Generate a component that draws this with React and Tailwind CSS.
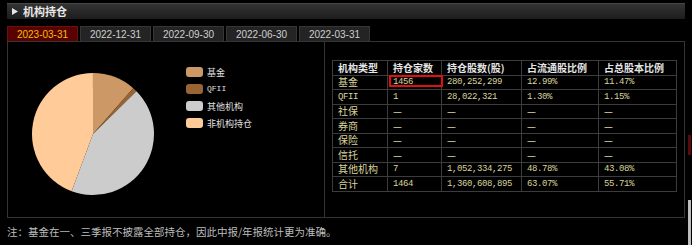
import React from 'react';

const cjk = "font-['Noto_Sans_CJK_SC',sans-serif]";
const mono = "font-['Liberation_Mono','Noto_Sans_CJK_SC',monospace]";

const tabs = ['2023-03-31', '2022-12-31', '2022-09-30', '2022-06-30', '2022-03-31'];

const slices = [
	{ name: '基金', pct: 11.47, color: '#cc9966' },
	{ name: 'QFII', pct: 1.15, color: '#996633' },
	{ name: '其他机构', pct: 43.08, color: '#cccccc' },
	{ name: '非机构持仓', pct: 44.29, color: '#ffcc99' },
];

const rows = [
	['基金', '1456', '280,252,299', '12.99%', '11.47%'],
	['QFII', '1', '28,022,321', '1.30%', '1.15%'],
	['社保', '—', '—', '—', '—'],
	['券商', '—', '—', '—', '—'],
	['保险', '—', '—', '—', '—'],
	['信托', '—', '—', '—', '—'],
	['其他机构', '7', '1,052,334,275', '48.78%', '43.08%'],
	['合计', '1464', '1,360,608,895', '63.07%', '55.71%'],
];

const heads = ['机构类型', '持仓家数', '持仓股数(股)', '占流通股比例', '占总股本比例'];
const widths = ['w-[55px]', 'w-[54px]', 'w-[80px]', 'w-[77px]', 'w-[78px]'];

function slicePath(cx, cy, r, a0, a1) {
	const rad = (a) => (a * Math.PI) / 180;
	const x0 = cx + r * Math.sin(rad(a0));
	const y0 = cy - r * Math.cos(rad(a0));
	const x1 = cx + r * Math.sin(rad(a1));
	const y1 = cy - r * Math.cos(rad(a1));
	const large = a1 - a0 > 180 ? 1 : 0;
	return `M${cx},${cy} L${x0},${y0} A${r},${r} 0 ${large} 1 ${x1},${y1} Z`;
}

function Pie() {
	let start = 0;
	return (
		<svg width="124" height="124" viewBox="0 0 124 124" className="mt-[5px] shrink-0">
			{slices.map((s) => {
				const end = start + (s.pct / 100) * 360;
				const d = slicePath(62, 62, 61, start, end);
				start = end;
				return <path key={s.name} d={d} fill={s.color} />;
			})}
		</svg>
	);
}

function Cell({ text, col }) {
	const isAscii = /^[0-9A-Z,.%]+$/.test(text);
	return (
		<td className={`${widths[col]} h-[14.5px] leading-[12px] border border-[#3c3c3c] pl-[5px] p-0 text-left text-[#d9d49c] ${isAscii ? mono + ' text-[9px] tracking-[-0.4px]' : cjk + ' text-[10px]'}`}>
			{col === 1 && text === '1456' ? (
				<span className="relative block">
					{text}
					<span className="absolute left-[-4px] top-[-1px] w-[54px] h-[12px] border-2 border-[#e01010]" />
				</span>
			) : (
				text
			)}
		</td>
	);
}

export default function App() {
	return (
		<div className={`w-[692px] h-[245px] bg-black overflow-hidden relative ${cjk}`}>
			{/* title bar */}
			<div className="mx-[7px] mt-[3px] h-[16px] bg-linear-to-b from-[#333333] to-[#1d1d1d] border-t border-[#474747] flex items-center">
				<svg width="6" height="7" viewBox="0 0 6 7" className="ml-[5px]">
					<path d="M0 0 L6 3.5 L0 7 Z" fill="#e6e6e6" />
				</svg>
				<span className="ml-[5px] text-[11px] font-bold text-[#e8e8e8] leading-none">机构持仓</span>
			</div>

			{/* date tabs */}
			<div className="ml-[7px] mt-[7px] flex gap-[2px]">
				{tabs.map((t, i) => (
					<div
						key={t}
						className={`w-[71px] h-[15px] flex items-center justify-center text-[10px] font-['Liberation_Sans',sans-serif] border-t border-x ${
							i === 0 ? 'bg-[#5a0202] text-[#f0c000] border-[#6d1010]' : 'bg-[#242424] text-[#cfcfcf] border-[#363636]'
						}`}
					>
						{t}
					</div>
				))}
			</div>

			{/* content box */}
			<div className="mx-[7px] h-[177px] border border-[#343434] flex">
				<div className="w-[317px] border-r border-[#343434] flex items-start pl-[23px] pt-[25px]">
					<Pie />
					<div className="ml-[31px] flex flex-col gap-[7px]">
						{slices.map((s) => (
							<div key={s.name} className="flex items-center h-[10px]">
								<span className="w-[17px] h-[10px] rounded-[3px]" style={{ backgroundColor: s.color }} />
								<span
									className={`ml-[4px] text-[#e0e0e0] leading-none ${
										s.name === 'QFII' ? mono + ' text-[8px]' : 'text-[9px]'
									}`}
								>
									{s.name}
								</span>
							</div>
						))}
					</div>
				</div>

				<div className="flex-1 pl-[7px] pt-[18px]">
					<table className="border-collapse">
						<thead>
							<tr>
								{heads.map((h, i) => (
									<th
										key={h}
										className={`${widths[i]} h-[14.5px] leading-[12px] border border-[#3c3c3c] p-0 pl-[5px] text-left text-[10px] font-bold text-[#e6e6e6]`}
									>
										{h}
									</th>
								))}
							</tr>
						</thead>
						<tbody>
							{rows.map((r) => (
								<tr key={r[0]}>
									{r.map((c, i) => (
										<Cell key={i} text={c} col={i} />
									))}
								</tr>
							))}
						</tbody>
					</table>
				</div>
			</div>

			<div className="ml-[7px] mt-[7px] text-[10.5px] leading-[14px] text-[#bdbdbd]">
				注：基金在一、三季报不披露全部持仓，因此中报/年报统计更为准确。
			</div>

			{/* bits of the neighbouring scrollbar at the right edge */}
			<div className="absolute right-[1px] top-[135px] w-[3px] h-[20px] bg-[#5a0a0a]" />
			<div className="absolute right-[1px] top-[200px] w-[3px] h-[45px] bg-[#bdbdbd]" />
		</div>
	);
}
